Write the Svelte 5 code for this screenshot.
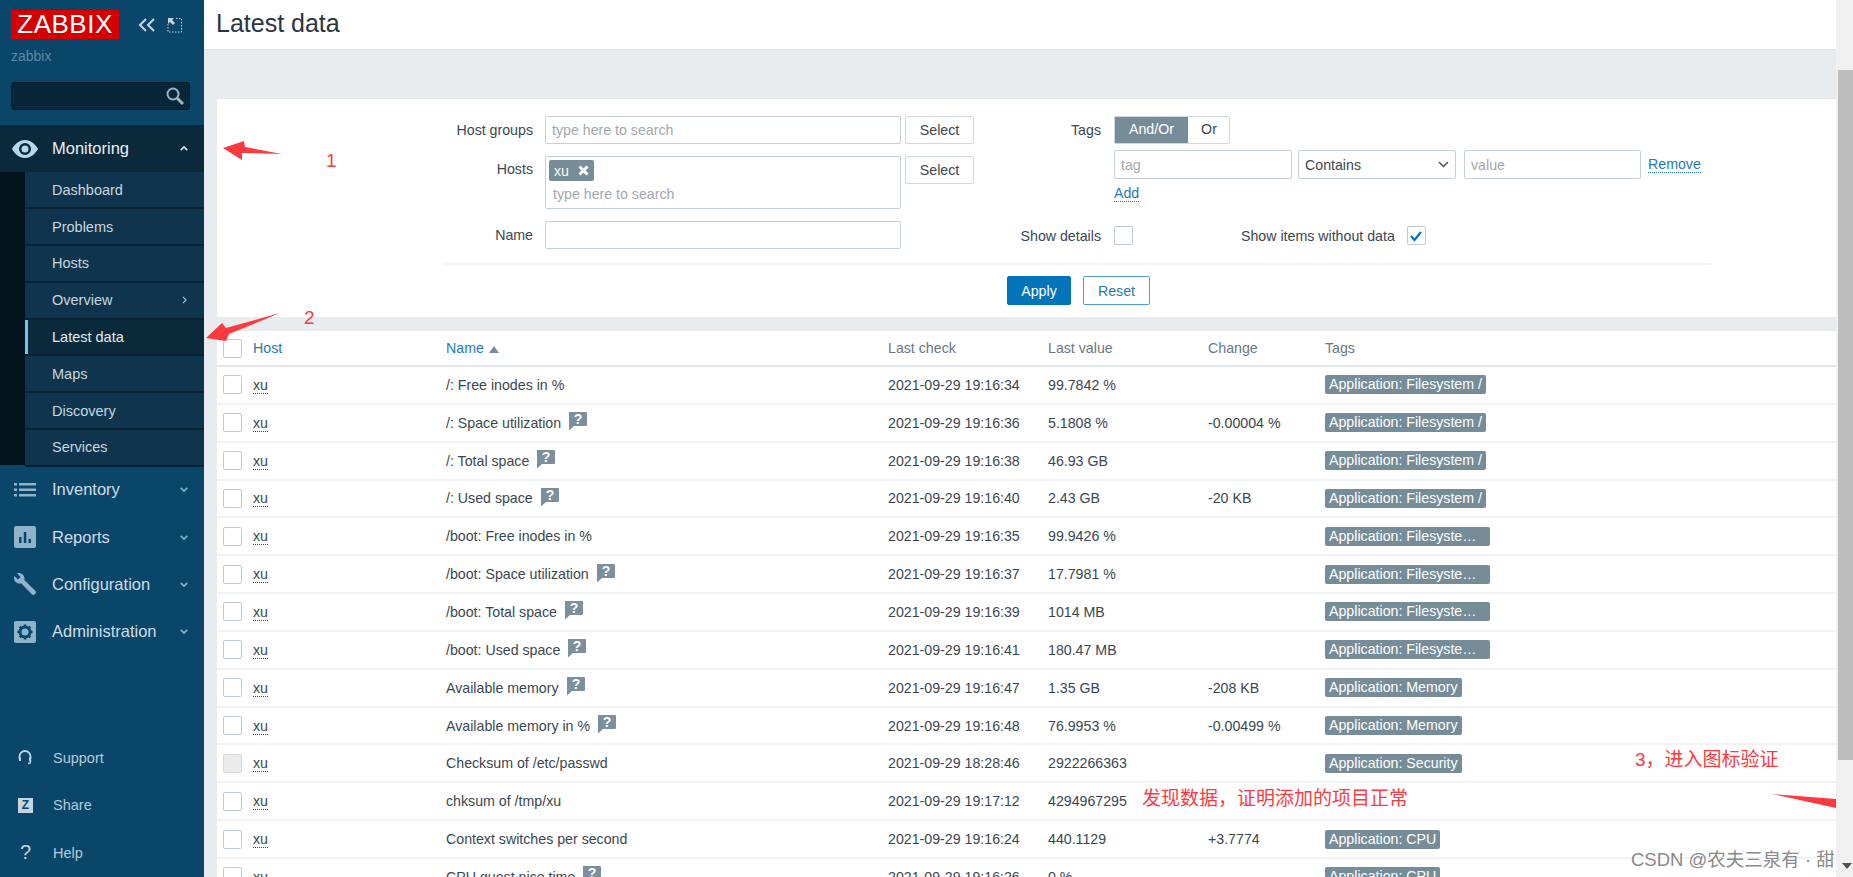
<script lang="ts">
  const subItems = ["Dashboard", "Problems", "Hosts", "Overview", "Latest data", "Maps", "Discovery", "Services"];
  const fs = "Application: Filesystem /";
  const boot = "Application: Filesystem /boot";
  const mem = "Application: Memory";
  const cpu = "Application: CPU";
  const rows = [
    { name: "/: Free inodes in %", help: false, check: "2021-09-29 19:16:34", value: "99.7842 %", change: "", tag: fs },
    { name: "/: Space utilization", help: true, check: "2021-09-29 19:16:36", value: "5.1808 %", change: "-0.00004 %", tag: fs },
    { name: "/: Total space", help: true, check: "2021-09-29 19:16:38", value: "46.93 GB", change: "", tag: fs },
    { name: "/: Used space", help: true, check: "2021-09-29 19:16:40", value: "2.43 GB", change: "-20 KB", tag: fs },
    { name: "/boot: Free inodes in %", help: false, check: "2021-09-29 19:16:35", value: "99.9426 %", change: "", tag: boot },
    { name: "/boot: Space utilization", help: true, check: "2021-09-29 19:16:37", value: "17.7981 %", change: "", tag: boot },
    { name: "/boot: Total space", help: true, check: "2021-09-29 19:16:39", value: "1014 MB", change: "", tag: boot },
    { name: "/boot: Used space", help: true, check: "2021-09-29 19:16:41", value: "180.47 MB", change: "", tag: boot },
    { name: "Available memory", help: true, check: "2021-09-29 19:16:47", value: "1.35 GB", change: "-208 KB", tag: mem },
    { name: "Available memory in %", help: true, check: "2021-09-29 19:16:48", value: "76.9953 %", change: "-0.00499 %", tag: mem },
    { name: "Checksum of /etc/passwd", help: false, check: "2021-09-29 18:28:46", value: "2922266363", change: "", tag: "Application: Security", disabled: true },
    { name: "chksum of /tmp/xu", help: false, check: "2021-09-29 19:17:12", value: "4294967295", change: "", tag: "" },
    { name: "Context switches per second", help: false, check: "2021-09-29 19:16:24", value: "440.1129", change: "+3.7774", tag: cpu },
    { name: "CPU guest nice time", help: true, check: "2021-09-29 19:16:26", value: "0 %", change: "", tag: cpu },
  ];
</script>

<div class="page">
  <aside class="sidebar">
    <div class="brand">
      <div class="logo">ZABBIX</div>
      <svg class="collapse" width="18" height="14" viewBox="0 0 18 14" fill="none" stroke="#c3d6e2" stroke-width="2">
        <path d="M8 1 2 7l6 6M16 1l-6 6 6 6" />
      </svg>
      <svg class="expand" width="16" height="16" viewBox="0 0 16 16" fill="none" stroke="#c3d6e2">
        <path d="M9 1.500h5.500V15H1V7" stroke-dasharray="1.500 1.500" />
        <path d="M1 1h6L5 3l3 3-2 2-3-3-2 2z" fill="#c3d6e2" stroke="none" />
      </svg>
    </div>
    <div class="server">zabbix</div>
    <div class="search">
      <svg width="20" height="20" viewBox="0 0 20 20" fill="none" stroke="#9fb4c1" stroke-width="2">
        <circle cx="8" cy="8" r="5.500" />
        <path d="m12 12 6 6" stroke-width="3" />
      </svg>
    </div>

    <div class="nav-item open">
      <svg class="nav-icon" width="26" height="18" viewBox="0 0 26 18">
        <path fill="#b7d8ec" fill-rule="evenodd" d="M13 0c6 0 10.500 4.500 13 9-2.500 4.500-7 9-13 9S2.500 13.500 0 9C2.500 4.500 7 0 13 0Zm0 3a6 6 0 1 0 0 12 6 6 0 0 0 0-12Z" />
        <circle cx="13" cy="9" r="3.500" fill="#b7d8ec" />
      </svg>
      <span>Monitoring</span>
      <svg class="chev" width="8" height="5" viewBox="0 0 10 6" fill="none" stroke="#d5e2ea" stroke-width="2"><path d="m1 5 4-4 4 4" /></svg>
    </div>
    <div class="submenu">
      {#each subItems as item}
        <div class="sub-item" class:active={item === "Latest data"}>
          {item}
          {#if item === "Overview"}
            <svg class="chev-r" width="5" height="8" viewBox="0 0 6 10" fill="none" stroke="#a9bfcc" stroke-width="1.500"><path d="m1 1 4 4-4 4" /></svg>
          {/if}
        </div>
      {/each}
    </div>

    <div class="nav-item">
      <svg class="nav-icon" width="22" height="14" viewBox="0 0 22 14" fill="#8fb3c9">
        <path d="M0 0h3v2.500H0zM5 0h17v2.500H5zM0 5.500h3V8H0zM5 5.500h17V8H5zM0 11h3v2.500H0zM5 11h17v2.500H5z" />
      </svg>
      <span>Inventory</span>
      <svg class="chev" width="8" height="5" viewBox="0 0 10 6" fill="none" stroke="#8fb3c9" stroke-width="2"><path d="m1 1 4 4 4-4" /></svg>
    </div>
    <div class="nav-item">
      <svg class="nav-icon" width="22" height="22" viewBox="0 0 22 22">
        <rect width="22" height="22" rx="2" fill="#8fb3c9" />
        <path d="M5 11h2.500v6H5zM9.800 6h2.500v11H9.800zM14.500 13H17v4h-2.500z" fill="#0a466a" />
      </svg>
      <span>Reports</span>
      <svg class="chev" width="8" height="5" viewBox="0 0 10 6" fill="none" stroke="#8fb3c9" stroke-width="2"><path d="m1 1 4 4 4-4" /></svg>
    </div>
    <div class="nav-item">
      <svg class="nav-icon" width="22" height="22" viewBox="0 0 22 22" fill="#8fb3c9">
        <path d="M5 0c-1 0-1.500.1-2 .3L6.500 4 4 6.500.3 3C.1 3.600 0 4.200 0 5c0 3 2.500 5.500 5.500 5.500.6 0 1.100-.1 1.600-.3L18 21.500c.7.700 1.800.7 2.500 0l1-1c.7-.7.700-1.800 0-2.500L10.300 7.100c.2-.5.200-1 .2-1.600C10.500 2.500 8 0 5 0Z" />
      </svg>
      <span>Configuration</span>
      <svg class="chev" width="8" height="5" viewBox="0 0 10 6" fill="none" stroke="#8fb3c9" stroke-width="2"><path d="m1 1 4 4 4-4" /></svg>
    </div>
    <div class="nav-item">
      <svg class="nav-icon" width="22" height="22" viewBox="0 0 22 22">
        <rect width="22" height="22" rx="2" fill="#8fb3c9" />
        <circle cx="11" cy="11" r="5" fill="none" stroke="#0a466a" stroke-width="3" />
        <path d="M11 3.500v3M11 15.500v3M3.500 11h3M15.500 11h3M5.700 5.700l2 2M14.300 14.300l2 2M16.300 5.700l-2 2M7.700 14.300l-2 2" stroke="#0a466a" stroke-width="2.500" />
      </svg>
      <span>Administration</span>
      <svg class="chev" width="8" height="5" viewBox="0 0 10 6" fill="none" stroke="#8fb3c9" stroke-width="2"><path d="m1 1 4 4 4-4" /></svg>
    </div>

    <div class="foot">
      <div class="foot-item">
        <svg width="14" height="15" viewBox="0 0 14 15" fill="none" stroke="#c3d6e2" stroke-width="1.800">
          <path d="M1.500 9V6.500a5.500 5.500 0 0 1 11 0V9" />
          <path d="M12.500 10v1.500c0 1-1 2-2.500 2" stroke-width="1.500" />
          <path d="M1 7.500h2V11H1zM11 7.500h2V11h-2z" fill="#c3d6e2" stroke="none" />
        </svg>
        <span>Support</span>
      </div>
      <div class="foot-item">
        <span class="share-box">Z</span>
        <span>Share</span>
      </div>
      <div class="foot-item">
        <span class="help-mark">?</span>
        <span>Help</span>
      </div>
    </div>
  </aside>

  <main class="main">
    <header class="title-bar"><h1>Latest data</h1></header>

    <section class="filter">
      <div class="filter-cols">
        <div class="col-left">
          <label class="lbl" for="hg">Host groups</label>
          <input id="hg" class="field" placeholder="type here to search" />
          <button class="btn-grey">Select</button>

          <span class="lbl lbl-top">Hosts</span>
          <div class="multi">
            <span class="chip">xu
              <svg width="11" height="11" viewBox="0 0 11 11" stroke="#fff" stroke-width="3"><path d="m1.500 1.500 8 8M9.500 1.500l-8 8" /></svg>
            </span>
            <span class="ph">type here to search</span>
          </div>
          <button class="btn-grey">Select</button>

          <label class="lbl" for="nm">Name</label>
          <input id="nm" class="field" />
        </div>

        <div class="col-right">
          <span class="lbl lbl-h">Tags</span>
          <div class="tags-box">
            <div class="radio"><span class="on">And/Or</span><span>Or</span></div>
            <div class="tag-row">
              <input class="field f-tag" placeholder="tag" />
              <div class="field f-sel">Contains
                <svg width="11" height="7" viewBox="0 0 11 7" fill="none" stroke="#4a555c" stroke-width="1.500"><path d="m1 1 4.500 4.500L10 1" /></svg>
              </div>
              <input class="field f-val" placeholder="value" />
              <span class="link">Remove</span>
            </div>
            <span class="link add">Add</span>
          </div>
          <span class="lbl lbl-det">Show details</span>
          <div class="det-row">
            <span class="box"></span>
            <span class="without">Show items without data</span>
            <span class="box">
              <svg width="14" height="12" viewBox="0 0 14 12" fill="none" stroke="#0275b8" stroke-width="2.200"><path d="m2 6 3.500 4L12 2" /></svg>
            </span>
          </div>
        </div>
      </div>
      <div class="sep"></div>
      <div class="actions">
        <button class="apply">Apply</button>
        <button class="reset">Reset</button>
      </div>
    </section>

    <section class="table">
      <div class="row head">
        <span class="box"></span>
        <span class="th-link">Host</span>
        <span class="th-link">Name <i class="sort"></i></span>
        <span>Last check</span>
        <span>Last value</span>
        <span>Change</span>
        <span>Tags</span>
      </div>
      {#each rows as r}
        <div class="row">
          <span class="box" class:disabled={r.disabled}></span>
          <span class="host"><u>xu</u></span>
          <span class="name">{r.name}
            {#if r.help}
              <svg class="hint" width="19" height="19" viewBox="0 0 19 19">
                <path fill="#7b8f9c" d="M1 0h17a1 1 0 0 1 1 1v12a1 1 0 0 1-1 1H6l-5 4.500V1a1 1 0 0 1 0-1Z" />
                <text x="10" y="12" text-anchor="middle" fill="#fff" font-size="14" font-weight="700" font-family="Liberation Sans">?</text>
              </svg>
            {/if}
          </span>
          <span>{r.check}</span>
          <span>{r.value}</span>
          <span>{r.change}</span>
          <span class="tag-cell">
            {#if r.tag}<span class="tag">{r.tag}</span>{/if}
          </span>
        </div>
      {/each}
    </section>
  </main>

  <div class="scrollbar">
    <div class="thumb"></div>
    <svg class="arrow-down" width="10" height="6" viewBox="0 0 10 6"><path d="M0 0h10L5 6z" fill="#505050" /></svg>
  </div>

  <!-- annotations painted over the screenshot -->
  <svg class="marks" width="1853" height="877" viewBox="0 0 1853 877">
    <path d="M223 148 244 141 245 147 282 154 242 153 242 160Z" fill="#fb3a3f" />
    <path d="M206 338 222 323 226 328 280 313 229 334 226 341Z" fill="#fb3a3f" />
    <path d="M1772 794 1836 799 1836 808Z" fill="#fb3a3f" />
  </svg>
  <span class="note n1">1</span>
  <span class="note n2">2</span>
  <span class="note n3">3，进入图标验证</span>
  <span class="note n4">发现数据，证明添加的项目正常</span>
  <span class="watermark">CSDN @农夫三泉有 · 甜</span>
</div>

<style>
  :global(body) {
    margin: 0;
    overflow: hidden;
  }
  .page {
    position: relative;
    display: flex;
    width: 1853px;
    height: 877px;
    overflow: hidden;
    background: #e9ecef;
    font-family: "Liberation Sans", Arial, sans-serif;
    font-size: 14.200px;
    color: #3b4750;
  }

  /* sidebar */
  .sidebar {
    flex: 0 0 204px;
    display: flex;
    flex-direction: column;
    background: #0a466a;
    position: relative;
  }
  .brand {
    display: flex;
    align-items: center;
    height: 29px;
    padding: 10px 0 0 11px;
  }
  .logo {
    width: 108px;
    height: 29px;
    background: #d40000;
    color: #fff;
    font-size: 26px;
    line-height: 29px;
    text-align: center;
    letter-spacing: 0.5px;
  }
  .collapse {
    margin-left: 19px;
  }
  .expand {
    margin-left: 11px;
  }
  .server {
    margin: 9px 0 0 11px;
    height: 16px;
    font-size: 14px;
    line-height: 16px;
    color: #5f8aa3;
  }
  .search {
    display: flex;
    align-items: center;
    justify-content: flex-end;
    box-sizing: border-box;
    width: 179px;
    height: 28px;
    margin: 18px 0 15px 11px;
    padding-right: 4px;
    background: #08263a;
    border: 1px solid #051a27;
    border-radius: 3px;
  }
  .nav-item {
    position: relative;
    display: flex;
    align-items: center;
    height: 47.400px;
    font-size: 16.500px;
    color: #cfdde6;
  }
  .nav-item span {
    position: absolute;
    left: 52px;
  }
  .nav-item.open {
    background: #0a2a3c;
    color: #ecf1f4;
  }
  .nav-icon {
    position: absolute;
    left: 14px;
  }
  .open .nav-icon {
    left: 12px;
  }
  .chev {
    position: absolute;
    left: 180px;
  }
  .submenu {
    padding-left: 25px;
    background: #04141c;
    height: 293px;
    margin-bottom: 0.600px;
  }
  .sub-item {
    position: relative;
    display: flex;
    align-items: center;
    box-sizing: border-box;
    height: 36.800px;
    padding-left: 27px;
    background: #0f344e;
    border-bottom: 2px solid #082233;
    font-size: 14.500px;
    color: #c9d6de;
  }
  .sub-item.active {
    background: #0a2a3c;
    box-shadow: inset 3px 0 0 #7cc0ee;
    color: #e3ebf0;
  }
  .chev-r {
    position: absolute;
    left: 157px;
  }
  .foot {
    margin-top: 78.500px;
    display: flex;
    flex-direction: column;
  }
  .foot-item {
    position: relative;
    display: flex;
    align-items: center;
    height: 47.500px;
    padding-left: 53px;
    font-size: 14.500px;
    color: #b5cbd9;
  }
  .foot-item > :first-child {
    position: absolute;
    left: 18px;
  }
  .foot-item > span:last-child {
    position: static;
  }
  .share-box {
    width: 15px;
    height: 15px;
    background: #c3d6e2;
    color: #0a466a;
    font-size: 12px;
    font-weight: 700;
    line-height: 15px;
    text-align: center;
  }
  .help-mark {
    left: 20px !important;
    font-size: 20px;
    color: #c3d6e2;
  }

  /* main */
  .main {
    flex: 0 0 1632px;
    display: flex;
    flex-direction: column;
  }
  .title-bar {
    flex: 0 0 49px;
    box-sizing: content-box;
    background: #fff;
    border-bottom: 1px solid #dfe3e6;
  }
  h1 {
    margin: 7px 0 0 12px;
    font-size: 25px;
    font-weight: 400;
    line-height: 33px;
    color: #2a363e;
  }
  .filter {
    flex: 0 0 219px;
    box-sizing: border-box;
    margin: 48px 0 0 13px;
    padding-top: 17px;
    background: #fff;
    border-top: 1px solid #e3e6e9;
  }
  .filter-cols {
    display: flex;
  }
  .col-left {
    display: grid;
    flex: 0 0 757px;
    min-width: 0;
    grid-template-columns: 316px 356px 69px;
    column-gap: 12px;
    row-gap: 12px;
    align-content: start;
  }
  .col-left > :nth-child(3n) {
    margin-left: -8px;
  }
  .lbl {
    text-align: right;
    align-self: center;
    color: #3b4750;
  }
  .lbl-top {
    align-self: start;
    margin-top: 5px;
  }
  .field {
    box-sizing: border-box;
    height: 28px;
    padding: 0 6px;
    border: 1.500px solid #c5d0d6;
    border-radius: 2px;
    background: #fff;
    font: inherit;
    color: inherit;
    outline: none;
  }
  .field::placeholder,
  .ph {
    color: #a3a8ac;
    opacity: 1;
  }
  .multi {
    box-sizing: border-box;
    height: 53px;
    padding: 3px 3px;
    border: 1.500px solid #c5d0d6;
    border-radius: 2px;
    display: flex;
    flex-direction: column;
    align-items: flex-start;
  }
  .chip {
    display: flex;
    align-items: center;
    gap: 9px;
    width: 45px;
    height: 21px;
    box-sizing: border-box;
    padding-left: 5px;
    background: #768d99;
    border-radius: 2px;
    color: #fff;
  }
  .ph {
    margin: 5px 0 0 4px;
  }
  .btn-grey {
    box-sizing: border-box;
    height: 28px;
    width: 69px;
    padding: 0;
    background: #fff;
    border: 1.500px solid #cfd8dc;
    border-radius: 2px;
    font: inherit;
    color: #3b4750;
  }
  .col-right {
    display: grid;
    grid-template-columns: 127px 1fr;
    column-gap: 13px;
    align-content: start;
  }
  .lbl-h {
    align-self: start;
    margin-top: 6px;
  }
  .lbl-det {
    margin-top: 18px;
  }
  .radio {
    display: flex;
    width: 116px;
    height: 28px;
    box-sizing: border-box;
    border: 1.500px solid #cfd8dc;
    border-radius: 2px;
    line-height: 25px;
    text-align: center;
  }
  .radio span {
    flex: 1 0 42px;
  }
  .radio .on {
    flex: 0 0 73px;
    background: #768d99;
    color: #fff;
  }
  .tag-row {
    display: flex;
    align-items: center;
    margin-top: 6px;
  }
  .f-tag {
    width: 178px;
    height: 29px;
  }
  .f-sel {
    display: flex;
    align-items: center;
    justify-content: space-between;
    width: 158px;
    height: 29px;
    margin-left: 6px;
  }
  .f-val {
    width: 177px;
    height: 29px;
    margin-left: 8px;
  }
  .link {
    color: #1f7ab5;
    border-bottom: 1px dotted #1f7ab5;
    line-height: 15px;
  }
  .tag-row .link {
    margin-left: 7px;
  }
  .add {
    display: inline-block;
    margin-top: 7px;
  }
  .tags-box {
    height: 92px;
  }
  .det-row {
    display: flex;
    align-items: center;
    margin-top: 18px;
  }
  .without {
    margin: 0 12px 0 108px;
  }
  .box {
    display: flex;
    align-items: center;
    justify-content: center;
    box-sizing: border-box;
    width: 19px;
    height: 19px;
    background: #fff;
    border: 1.500px solid #bfcbd2;
    border-radius: 2px;
  }
  .box.disabled {
    background: #ebebeb;
    border-color: #d5dadd;
  }
  .sep {
    height: 2px;
    margin: 14px 125px 0 228px;
    background: #f3f4f5;
  }
  .actions {
    display: flex;
    gap: 12px;
    margin: 11px 0 0 790px;
  }
  .apply,
  .reset {
    box-sizing: border-box;
    height: 29px;
    padding: 0;
    border-radius: 2px;
    font: inherit;
  }
  .apply {
    width: 64px;
    background: #0275b8;
    border: 1px solid #0275b8;
    color: #fff;
  }
  .reset {
    width: 67px;
    background: #fff;
    border: 1.500px solid #4a9ccf;
    color: #1f7ab5;
  }

  /* table */
  .table {
    margin: 14px 0 0 13px;
    background: #fff;
  }
  .row {
    display: grid;
    grid-template-columns: 19px 204px 442px 160px 160px 117px 1fr;
    align-items: center;
    box-sizing: border-box;
    height: 37.850px;
    padding-left: 6px;
    border-bottom: 2px solid #f2f3f4;
  }
  .row > .box + span {
    margin-left: 11px;
  }
  .row.head {
    height: 36px;
    border-bottom: 2px solid #e3e6e9;
    color: #6b7880;
  }
  .th-link {
    color: #1f7ab5;
  }
  .sort {
    display: inline-block;
    width: 0;
    height: 0;
    margin-left: 1px;
    border: 5px solid transparent;
    border-top: 0;
    border-bottom: 7px solid #768d99;
  }
  .host u {
    text-decoration: none;
    border-bottom: 1px dotted #3b4750;
  }
  .name {
    display: flex;
    align-items: center;
    gap: 7px;
  }
  .hint {
    margin-top: -2px;
  }
  .tag {
    display: block;
    box-sizing: border-box;
    width: fit-content;
    max-width: 165px;
    height: 19px;
    padding: 0 4px;
    background: #768d99;
    border-radius: 2px;
    color: #fff;
    line-height: 19px;
    white-space: nowrap;
    overflow: hidden;
    text-overflow: ellipsis;
  }

  /* scrollbar + annotations */
  .scrollbar {
    position: absolute;
    top: 0;
    right: 0;
    width: 17px;
    height: 877px;
    background: #f0f0f0;
  }
  .thumb {
    position: absolute;
    top: 70px;
    left: 2px;
    right: 0;
    height: 690px;
    background: #bdbdbd;
  }
  .arrow-down {
    position: absolute;
    left: 6px;
    bottom: 8px;
  }
  .marks {
    position: absolute;
    top: 0;
    left: 0;
    pointer-events: none;
  }
  .note {
    position: absolute;
    color: #fb3a3f;
    font-family: "Liberation Sans", "Noto Sans CJK SC", sans-serif;
    font-size: 19px;
    line-height: 22px;
    white-space: nowrap;
  }
  .n1 { left: 326px; top: 150px; }
  .n2 { left: 304px; top: 307px; }
  .n3 { left: 1635px; top: 749px; }
  .n4 { left: 1142px; top: 788px; }
  .watermark {
    position: absolute;
    left: 1631px;
    top: 849px;
    color: #8a8a8a;
    font-family: "Liberation Sans", "Noto Sans CJK SC", sans-serif;
    font-size: 18.500px;
    line-height: 22px;
    white-space: nowrap;
  }
</style>
